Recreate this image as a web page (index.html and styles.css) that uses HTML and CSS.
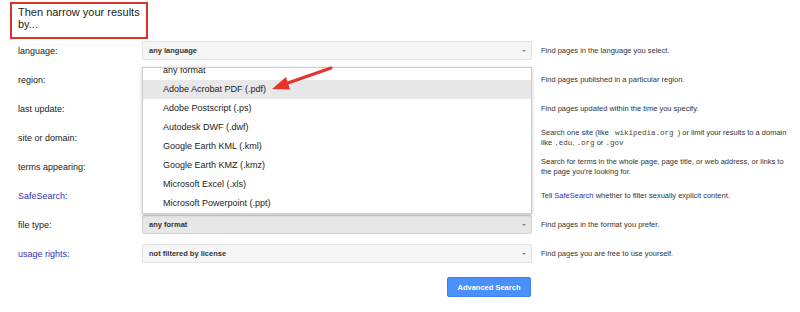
FILE: index.html
```html
<!DOCTYPE html>
<html>
<head>
<meta charset="utf-8">
<link rel="stylesheet" href="styles.css">
</head>
<body>
<div class="page">
  <div class="heading">Then narrow your results by...</div>
  <div class="form">
    <div class="row">
      <div class="label">language:</div>
      <div class="select">any language<span class="caret"></span></div>
      <div class="desc">Find pages in the language you select.</div>
    </div>
    <div class="row">
      <div class="label">region:</div>
      <div class="select">any region<span class="caret"></span></div>
      <div class="desc">Find pages published in a particular region.</div>
    </div>
    <div class="row">
      <div class="label">last update:</div>
      <div class="select">anytime<span class="caret"></span></div>
      <div class="desc">Find pages updated within the time you specify.</div>
    </div>
    <div class="row">
      <div class="label">site or domain:</div>
      <div class="select"></div>
      <div class="desc">Search one site (like <code class="pad">wikipedia.org</code> ) or limit your results to a domain like <code>.edu</code>, <code>.org</code> or <code>.gov</code></div>
    </div>
    <div class="row">
      <div class="label">terms appearing:</div>
      <div class="select">anywhere in the page<span class="caret"></span></div>
      <div class="desc">Search for terms in the whole page, page title, or web address, or links to the page you're looking for.</div>
    </div>
    <div class="row">
      <div class="label link">SafeSearch:</div>
      <div class="select">show most relevant results<span class="caret"></span></div>
      <div class="desc">Tell <span class="link">SafeSearch</span> whether to filter sexually explicit content.</div>
    </div>
    <div class="row">
      <div class="label">file type:</div>
      <div class="select active">any format<span class="caret"></span></div>
      <div class="desc">Find pages in the format you prefer.</div>
    </div>
    <div class="row">
      <div class="label link">usage rights:</div>
      <div class="select">not filtered by license<span class="caret"></span></div>
      <div class="desc">Find pages you are free to use yourself.</div>
    </div>
    <div class="row actions">
      <div></div>
      <div class="btn-cell"><button class="btn">Advanced Search</button></div>
      <div></div>
    </div>

    <div class="dropdown">
      <ul class="menu">
        <li>any format</li>
        <li class="hl">Adobe Acrobat PDF (.pdf)</li>
        <li>Adobe Postscript (.ps)</li>
        <li>Autodesk DWF (.dwf)</li>
        <li>Google Earth KML (.kml)</li>
        <li>Google Earth KMZ (.kmz)</li>
        <li>Microsoft Excel (.xls)</li>
        <li>Microsoft Powerpoint (.ppt)</li>
      </ul>
    </div>
  </div>

  <svg class="arrow" width="75" height="40" viewBox="0 0 75 40">
    <line x1="66" y1="8" x2="20" y2="24" stroke="#e8332b" stroke-width="3" stroke-linecap="round"/>
    <polygon points="7,29 25,29.5 21,17" fill="#e8332b"/>
  </svg>
</div>
</body>
</html>
```

FILE: styles.css
```css
html, body {
  margin: 0;
  padding: 0;
  background: #fff;
}

.page {
  position: relative;
  width: 800px;
  height: 312px;
  overflow: hidden;
  font-family: "Liberation Sans", Arial, sans-serif;
  color: #222;
}

.heading {
  margin: 2px 0 -3px 10px;
  width: 122px;
  height: 31px;
  border: 2px solid #d9342b;
  padding: 2px 6px 0 6px;
  font-size: 11px;
  line-height: 12px;
  color: #222;
}

.form {
  position: relative;
  padding-left: 18px;
}

.row {
  display: grid;
  grid-template-columns: 124px 390px 257px;
  height: 29px;
  align-items: center;
}

.row .label {
  font-size: 9px;
  color: #222;
}

.link {
  color: #3431b3;
}

.row .label.link {
  color: #3431b3;
}

.select {
  position: relative;
  height: 17px;
  line-height: 17px;
  border: 1px solid #e3e3e3;
  border-radius: 2px;
  background: #f6f6f6;
  padding-left: 6px;
  font-size: 7.5px;
  font-weight: bold;
  color: #333;
}

.select.active {
  background: #e7e7e7;
  border-color: #d2d2d2;
}

.caret {
  position: absolute;
  right: 5px;
  top: 8px;
  width: 0;
  height: 0;
  border-left: 2px solid transparent;
  border-right: 2px solid transparent;
  border-top: 2px solid #888;
}

.desc {
  padding-left: 9px;
  font-size: 7.5px;
  line-height: 10px;
  color: #333;
}

.desc code {
  font-family: "Liberation Mono", "Courier New", monospace;
  font-size: 7.5px;
  line-height: 1;
  color: #444;
}

.desc code.pad {
  padding: 0 2px 0 4px;
}

.actions {
  margin-top: 9px;
  height: 20px;
}

.btn-cell {
  display: flex;
  justify-content: flex-end;
  padding-right: 1px;
}

.btn {
  width: 84px;
  height: 20px;
  border: 1px solid #3b82f0;
  border-radius: 2px;
  background: #4a8ffa;
  color: #fff;
  font-family: "Liberation Sans", Arial, sans-serif;
  font-size: 7.5px;
  font-weight: bold;
  padding: 0;
}

.dropdown {
  position: absolute;
  left: 142px;
  top: 31px;
  width: 388px;
  height: 145px;
  border: 1px solid #cfcfcf;
  background: #fff;
  overflow: hidden;
  box-shadow: 0 1px 3px rgba(0, 0, 0, 0.25);
}

.menu {
  list-style: none;
  margin: -7px 0 0 0;
  padding: 0;
}

.menu li {
  height: 19px;
  line-height: 19px;
  padding-left: 20px;
  font-size: 9px;
  color: #222;
}

.menu li.hl {
  background: #e8e8e8;
}

.arrow {
  position: absolute;
  left: 265px;
  top: 60px;
}
```
